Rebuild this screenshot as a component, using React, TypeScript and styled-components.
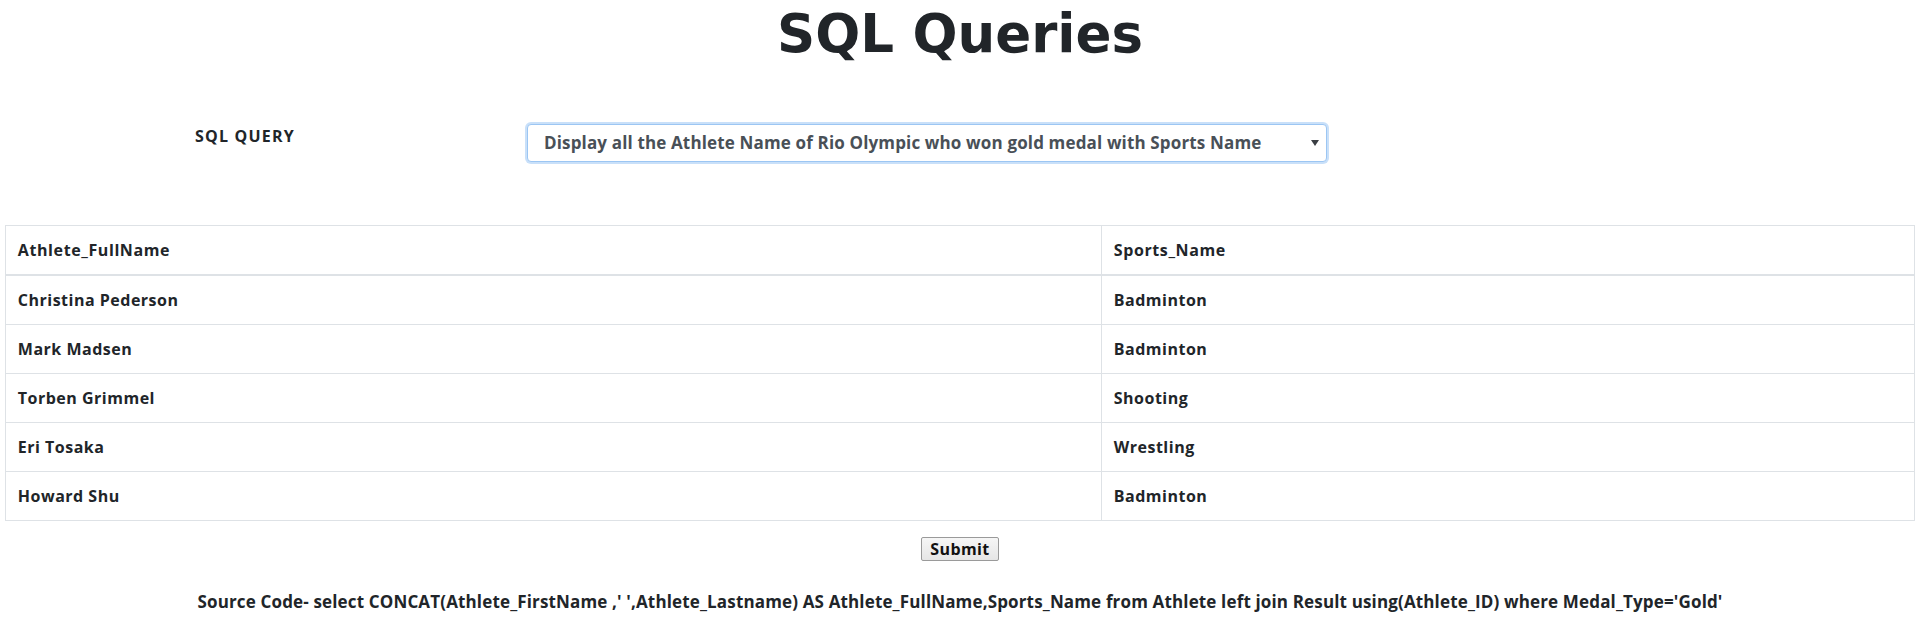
import React from "react";
import styled, { createGlobalStyle } from "styled-components";

const GlobalStyle = createGlobalStyle`
  html, body {
    margin: 0;
    padding: 0;
    background: #ffffff;
  }
  body {
    font-family: "Open Sans", "Liberation Sans", sans-serif;
    color: #212529;
  }
  * { box-sizing: border-box; }
`;

const Page = styled.div`
  display: flex;
  flex-direction: column;
  align-items: center;
  width: 100%;
`;

const Title = styled.h1`
  margin: 3px 0 0;
  font-family: "DejaVu Sans", "Open Sans", sans-serif;
  font-size: 53px;
  font-weight: 700;
  line-height: 62px;
  letter-spacing: 0;
  color: #212529;
  text-align: center;
`;

const FormRow = styled.div`
  align-self: stretch;
  display: flex;
  align-items: flex-start;
  margin-top: 59px;
  padding-left: 195px;
`;

const Label = styled.label`
  width: 332px;
  flex: none;
  font-size: 16px;
  font-weight: 700;
  line-height: 24px;
  letter-spacing: 1.2px;
  color: #212529;
`;

const SelectWrap = styled.div`
  position: relative;
  width: 800px;
  flex: none;
`;

const Select = styled.select`
  appearance: none;
  -webkit-appearance: none;
  display: block;
  width: 100%;
  height: 38px;
  padding: 0 30px 0 16px;
  font-family: "Open Sans", sans-serif;
  font-size: 17px;
  font-weight: 700;
  line-height: 24px;
  letter-spacing: 0.15px;
  color: #495057;
  background: #ffffff;
  border: 1px solid #9cc6f3;
  border-radius: 4px;
  box-shadow: 0 0 0 2px #c9e0f9;
  outline: none;
`;

const Caret = styled.span`
  position: absolute;
  right: 8px;
  top: 16px;
  width: 0;
  height: 0;
  border-left: 4px solid transparent;
  border-right: 4px solid transparent;
  border-top: 6px solid #3a3f44;
  pointer-events: none;
`;

const Table = styled.table`
  width: 99.5%;
  margin-top: 63px;
  border-collapse: collapse;
  border: 1px solid #dee2e6;
  color: #212529;
`;

const HeadCell = styled.th<{ $w?: string }>`
  width: ${(p) => p.$w || "auto"};
  padding: 12px;
  text-align: left;
  font-size: 16px;
  font-weight: 700;
  line-height: 24px;
  letter-spacing: 0.6px;
  border: 1px solid #dee2e6;
  border-bottom: 2px solid #dee2e6;
  vertical-align: bottom;
`;

const Cell = styled.td`
  padding: 12px;
  font-size: 16px;
  font-weight: 700;
  line-height: 24px;
  letter-spacing: 0.5px;
  border: 1px solid #dee2e6;
  vertical-align: top;
`;

const SubmitButton = styled.button`
  margin-top: 16px;
  height: 24px;
  padding: 0 8px;
  font-family: "Open Sans", sans-serif;
  font-size: 16px;
  font-weight: 700;
  line-height: 20px;
  letter-spacing: 0.4px;
  color: #111111;
  background: linear-gradient(#f6f6f6, #e6e6e6);
  border: 1px solid #9a9a9a;
  border-radius: 2px;
`;

const SourceCode = styled.p`
  margin: 29px 0 0;
  font-size: 17px;
  font-weight: 700;
  line-height: 24px;
  letter-spacing: 0.15px;
  color: #212529;
  text-align: center;
  white-space: nowrap;
`;

const rows: [string, string][] = [
  ["Christina Pederson", "Badminton"],
  ["Mark Madsen", "Badminton"],
  ["Torben Grimmel", "Shooting"],
  ["Eri Tosaka", "Wrestling"],
  ["Howard Shu", "Badminton"],
];

export default function App() {
  return (
    <>
      <GlobalStyle />
      <Page>
        <Title>SQL Queries</Title>
        <FormRow>
          <Label htmlFor="query">SQL QUERY</Label>
          <SelectWrap>
            <Select id="query" defaultValue="q1">
              <option value="q1">
                Display all the Athlete Name of Rio Olympic who won gold medal with Sports Name
              </option>
            </Select>
            <Caret />
          </SelectWrap>
        </FormRow>
        <Table>
          <thead>
            <tr>
              <HeadCell $w="57.4%">Athlete_FullName</HeadCell>
              <HeadCell>Sports_Name</HeadCell>
            </tr>
          </thead>
          <tbody>
            {rows.map(([name, sport]) => (
              <tr key={name}>
                <Cell>{name}</Cell>
                <Cell>{sport}</Cell>
              </tr>
            ))}
          </tbody>
        </Table>
        <SubmitButton type="button">Submit</SubmitButton>
        <SourceCode>
          Source Code- select CONCAT(Athlete_FirstName ,' ',Athlete_Lastname) AS
          Athlete_FullName,Sports_Name from Athlete left join Result using(Athlete_ID) where
          Medal_Type='Gold'
        </SourceCode>
      </Page>
    </>
  );
}
